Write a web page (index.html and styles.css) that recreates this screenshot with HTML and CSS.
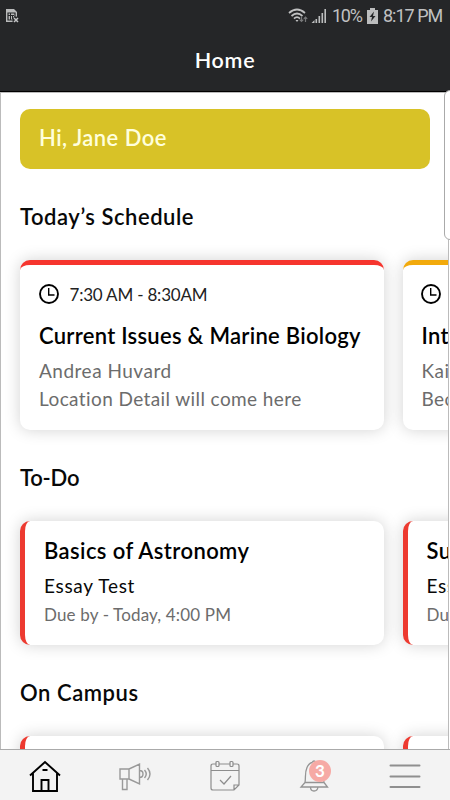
FILE: index.html
```html
<!DOCTYPE html>
<html lang="en">
<head>
<meta charset="utf-8">
<title>Home</title>
<link rel="stylesheet" href="styles.css">
</head>
<body>
<div class="app">
  <header class="header">
    <div class="status">
      <svg class="sim" width="15" height="16" viewBox="0 0 15 16"><path d="M1 1h8l3 3v5l-3 5H1z" fill="#b9babb"/><path d="M3 5h7v7H3z" fill="none" stroke="#252628" stroke-width="1.2"/><path d="M3 7.5h6M5.5 5v7M7.5 7v4" stroke="#252628"/><path d="M8.5 9.5l5 5m0-5l-5 5" stroke="#252628" stroke-width="4"/><path d="M9 10l4 4m0-4l-4 4" stroke="#c4c5c6" stroke-width="1.5"/></svg>
      <div class="status-right">
        <svg class="wifi" width="21" height="16" viewBox="0 0 21 16" fill="none"><path d="M1 5q8-7 16 0M3.5 8q5.5-5 11 0M6 10.700q3-3 6 0" stroke="#c0c1c2" stroke-width="1.7"/><path d="M7.500 12h3L9 14z" fill="#c0c1c2"/><path d="M13.500 8.500v5m-1.800-1.800l1.800 1.800 1.800-1.800M17.500 14V9m-1.700 1.800L17.500 9l1.700 1.800" stroke="#77787a" stroke-width="1.200"/></svg>
        <svg class="signal" width="16" height="16" viewBox="0 0 16 16"><path d="M.5 15l3-3v3zM4.500 11h1.600v4H4.500zM7.500 8h1.600v7H7.500zM10.500 5h1.600v10h-1.600zM13.400 1H15v14h-1.600z" fill="#bcbdbe"/></svg>
        <span class="percent">10%</span>
        <svg class="battery" width="11" height="16" viewBox="0 0 11 16"><path d="M3 0h5v2h3v14H0V2h3z" fill="#bcbdbe"/><path d="M7 3.500L2.500 9H5l-1 4.500L8.500 8H6z" fill="#252628"/></svg>
        <span class="clock">8:17 PM</span>
      </div>
    </div>
    <h1 class="page-title">Home</h1>
  </header>

  <main class="content">
    <div class="greeting"><span class="greeting-text">Hi, Jane Doe</span></div>
    <h2 class="heading schedule-heading">Today’s Schedule</h2>
    <div class="row">
      <article class="card event">
        <div class="time"><svg width="20" height="20" viewBox="0 0 20 20" fill="none" stroke="#000" stroke-width="1.900"><circle cx="10" cy="10" r="9"/><path d="M9.700 4v7H15.500" stroke-width="1.400"/></svg><span class="time-text">7:30 AM - 8:30AM</span></div>
        <h3 class="card-title event-title">Current Issues &amp; Marine Biology</h3>
        <p class="detail person">Andrea Huvard</p>
        <p class="detail place">Location Detail will come here</p>
      </article>
      <article class="card event amber">
        <div class="time"><svg width="20" height="20" viewBox="0 0 20 20" fill="none" stroke="#000" stroke-width="1.900"><circle cx="10" cy="10" r="9"/><path d="M9.700 4v7H15.500" stroke-width="1.400"/></svg></div>
        <h3 class="card-title event-title">Int</h3>
        <p class="detail person">Kai</p>
        <p class="detail place">Bec</p>
      </article>
    </div>
    <h2 class="heading todo-heading">To-Do</h2>
    <div class="row">
      <article class="card task">
        <h3 class="card-title task-title">Basics of Astronomy</h3>
        <p class="kind">Essay Test</p>
        <p class="due">Due by - Today, 4:00 PM</p>
      </article>
      <article class="card task">
        <h3 class="card-title task-title">Su</h3>
        <p class="kind">Ess</p>
        <p class="due">Du</p>
      </article>
    </div>
    <h2 class="heading campus-heading">On Campus</h2>
    <div class="row">
      <article class="card task"></article>
      <article class="card task"></article>
    </div>
  </main>
  <div class="drawer-edge"></div>

  <nav class="tabs">
    <a class="tab"><svg width="32" height="34" viewBox="0 0 32 34" fill="none" stroke="#000" stroke-width="1.900"><path d="M1 16.500L16 3l15 13.500M4 14.500V32h24V14.500M12.500 32V21h7v11M13.500 11h5"/></svg></a>
    <a class="tab"><svg width="34" height="34" viewBox="0 0 34 34" fill="none" stroke="#999" stroke-width="1.400"><path d="M2 10h9v10H2zM11 10l10.500-5v20L11 20M4.500 20v10.500h4.500V20M21.500 11.500q3.500 0 3.500 3.500t-3.500 3.500M26.500 11q3.500 4 0 8M29.500 9q5 6 0 12"/></svg></a>
    <a class="tab"><svg width="32" height="34" viewBox="0 0 32 34" fill="none" stroke="#8d8d8d" stroke-width="1.200"><path d="M7 5H4Q2 5 2 7V29Q2 31 4 31H25L30 26V7Q30 5 28 5H24M10 5H21M2 11.500H30M25 31V26H30M11 21l4 4 7-8"/><rect x="7" y="2.500" width="3" height="5" rx="1"/><rect x="21" y="2.500" width="3" height="5" rx="1"/></svg></a>
    <a class="tab"><svg width="32" height="34" viewBox="0 0 32 34" fill="none" stroke="#949494" stroke-width="1.300"><path d="M6 23.500C7 18 5.500 14 8 8.500Q10 4 13 3.500Q15 .5 17 3.500Q21 4 23 8.500C25 14 24 18 25 23.500M6 23.500L2 28H28.500L25 23.500H6M11.500 28Q11.500 32 15 32T19 28"/></svg><span class="badge">3</span></a>
    <a class="tab"><svg width="32" height="34" viewBox="0 0 32 34" stroke="#8f8f8f" stroke-width="2" stroke-linecap="round"><path d="M1.500 6.500h29M1.500 17.500h29M1.500 28h29"/></svg></a>
  </nav>
</div>
</body>
</html>
```
FILE: styles.css
```css
* { box-sizing: border-box; }
body { margin: 0; }
h1, h2, h3, p { margin: 0; white-space: nowrap; }
svg { display: block; flex: none; }
.app {
  position: relative;
  width: 450px;
  height: 800px;
  overflow: hidden;
  display: flex;
  flex-direction: column;
  background: #fff;
  font-family: Lato, "Open Sans", sans-serif;
  font-variant-ligatures: none;
  color: #080808;
}
.header {
  height: 92px;
  flex: none;
  background: #252628;
  border-bottom: 1px solid #000;
  color: #fff;
}
.status {
  display: flex;
  justify-content: space-between;
  align-items: center;
  height: 31px;
  padding: 0 7px 0 5px;
}
.status-right {
  display: flex;
  align-items: center;
  font: 18px/20px Roboto, sans-serif;
  color: #c0c1c2;
}
.signal { margin: 0 5px 0 2px; }
.battery { margin: 0 5px; }
.percent { width: 30px; letter-spacing: -1.300px; }
.clock { width: 60px; letter-spacing: -1px; white-space: nowrap; }
.page-title {
  font-size: 21.500px;
  line-height: 26px;
  margin-top: 16px;
  text-align: center;
  font-weight: 600;
  letter-spacing: 0.700px;
}
.content {
  flex: 1;
  min-height: 0;
  overflow: hidden;
  border: 1px solid #bbb;
  border-bottom: 0;
  padding: 16px 0 0 19px;
  margin-right: 1px;
}
.greeting {
  height: 60px;
  width: 410px;
  border-radius: 10px;
  background: #d8c227;
  color: #ffffdc;
  padding: 16px 19px;
  font-size: 22px;
  line-height: 26px;
  font-weight: 600;
  letter-spacing: 0.450px;
}
.heading { font-size: 22px; line-height: 26px; font-weight: 600; letter-spacing: 0.550px; }
.schedule-heading { margin: 35px 0 30px; }
.todo-heading { margin: 35px 0 30px; letter-spacing: -0.200px; }
.campus-heading { margin: 35px 0 30px; }
.row { display: flex; gap: 18.500px; }
.card {
  flex: none;
  width: 364px;
  background: #fff;
  border-radius: 10px;
  box-shadow: 0 0 16px rgba(0, 0, 0, 0.18);
}
.event { height: 170px; border-top: 5px solid #f6352e; padding: 19px 19px 0; }
.amber { border-top-color: #f2aa0c; }
.time { display: flex; gap: 11px; height: 20px; align-items: center; }
.time svg { margin-left: -0.500px; }
.time-text { font-size: 17px; line-height: 20px; letter-spacing: -0.200px; position: relative; top: 1px; color: #222; }
.card-title { font-size: 22px; line-height: 26px; font-weight: 600; color: #000; }
.event-title { margin-top: 19px; letter-spacing: 0.280px; }
.task-title { letter-spacing: 0.400px; }
.detail { font-size: 19px; line-height: 24px; color: #6c6c6c; }
.person { margin-top: 10px; letter-spacing: 0.500px; }
.place { margin-top: 4px; letter-spacing: 0.400px; }
.task { height: 124px; border-left: 5px solid #ed3a30; padding: 17px 19px 0; }
.kind { margin-top: 10px; font-size: 19px; line-height: 24px; letter-spacing: 0.700px; }
.due { margin-top: 6px; font-size: 17px; line-height: 22px; letter-spacing: 0.150px; color: #6c6c6c; }
.drawer-edge {
  position: absolute;
  left: 444px;
  top: 90px;
  width: 12px;
  height: 150px;
  border: 1px solid #aaa;
  border-radius: 7px;
  background: #fff;
}
.tabs {
  height: 51px;
  flex: none;
  border-top: 1px solid #aaa;
  background: #f3f3f3;
  display: grid;
  grid-template-columns: repeat(5, 1fr);
}
.tab { position: relative; display: flex; justify-content: center; padding-top: 9px; }
.badge {
  position: absolute;
  left: 39px;
  top: 10px;
  width: 22px;
  height: 22px;
  border-radius: 50%;
  background: #f6aaa5;
  color: #fff;
  font-size: 17px;
  line-height: 22px;
  font-weight: 700;
  text-align: center;
}
```
